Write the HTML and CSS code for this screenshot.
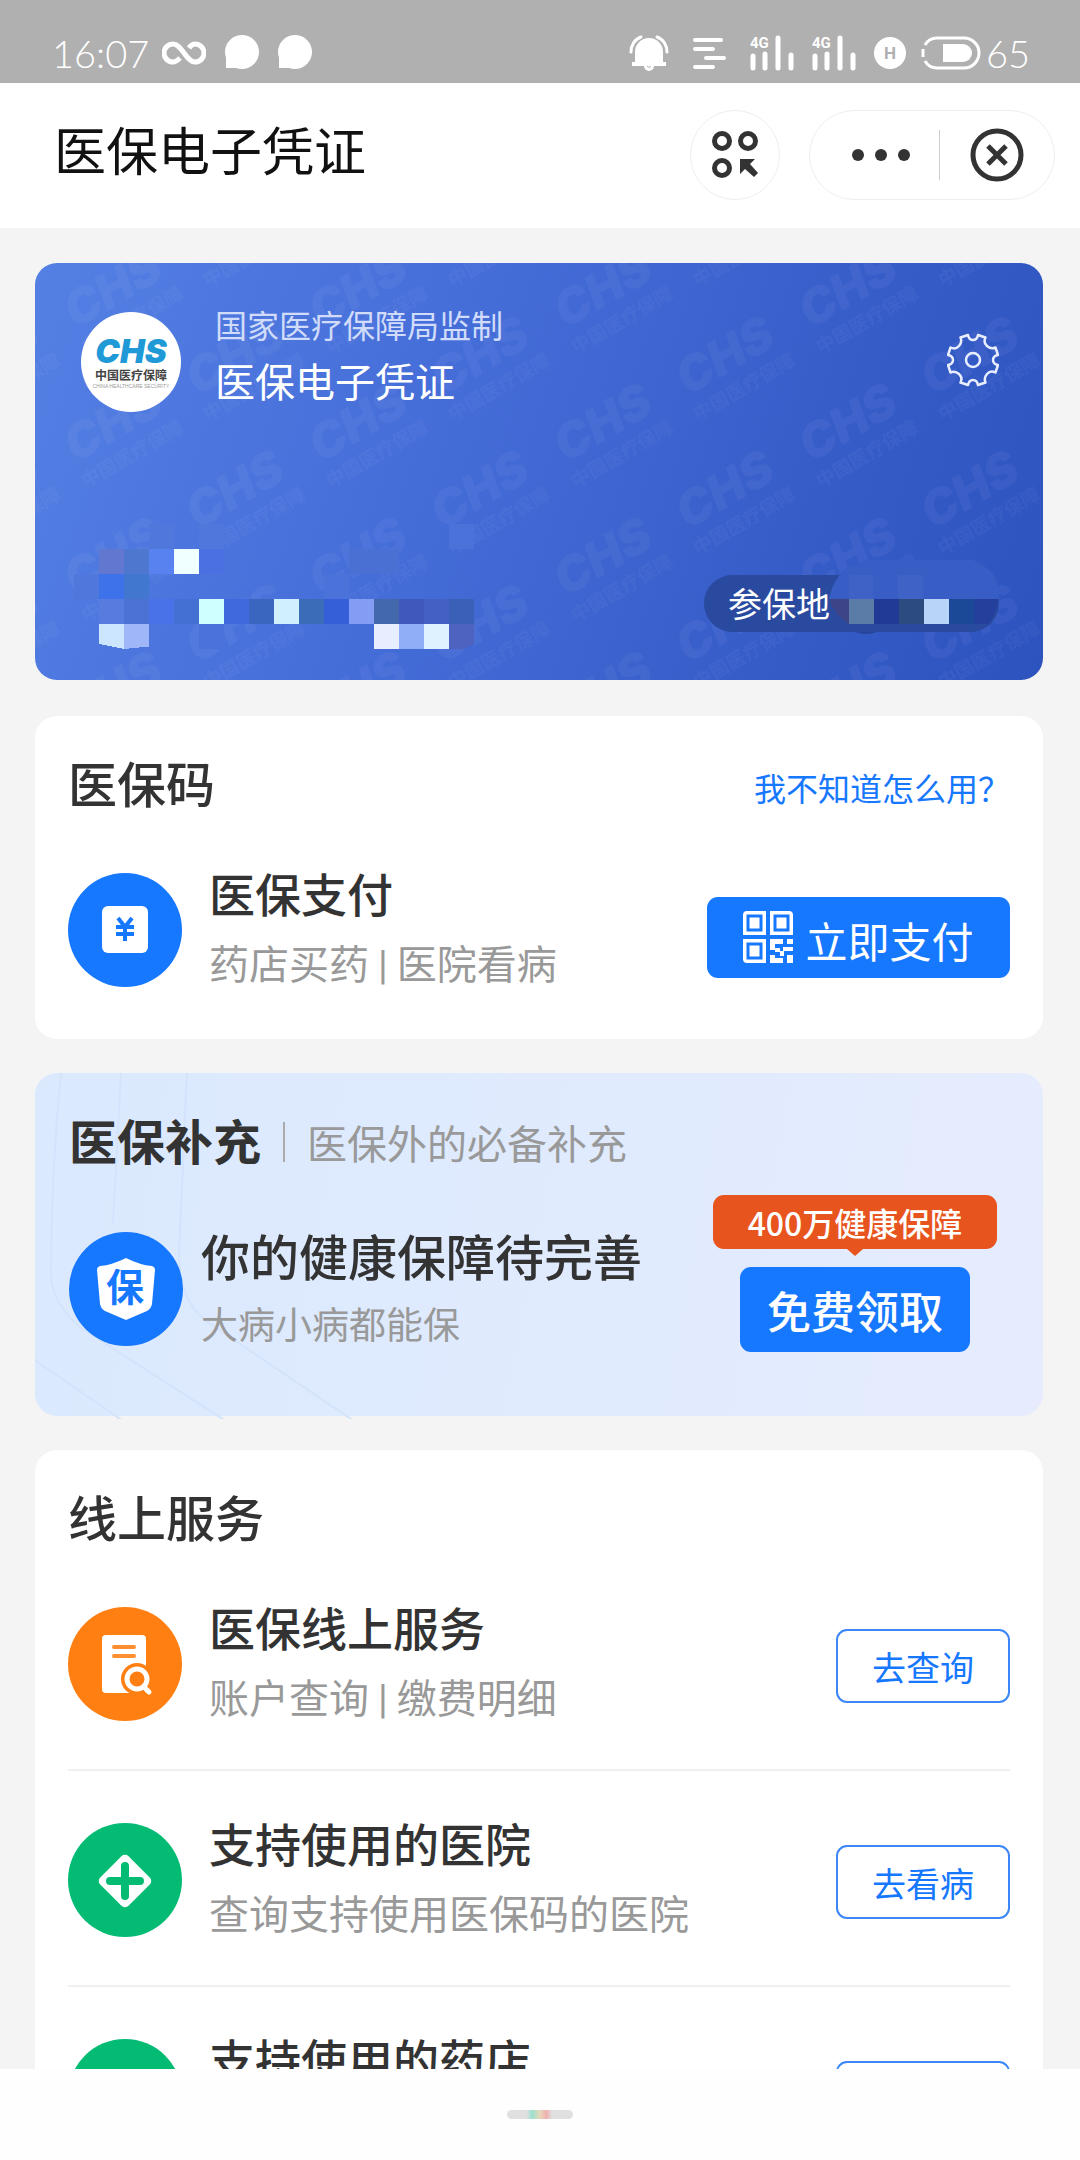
FILE: index.html
```html
<!DOCTYPE html>
<html lang="zh-CN">
<head>
    <meta charset="UTF-8">
    <title>医保电子凭证</title>
    <meta name="viewport" content="width=device-width, initial-scale=1">
    <link rel="stylesheet" href="styles.css">
</head>
<body>
<div class="status-bar">
    <span class="status-text">16:07</span>
    <svg class="icon-infinity" width="44" height="24" viewBox="0 0 44 24"><path d="M18 17C15 20 13 21 11 21a9 9 0 0 1 0-18c9 0 13 18 22 18a9 9 0 0 0 0-18c-2 0-4 1-6 4" fill="none" stroke="#fff" stroke-width="5"/></svg>
    <svg class="icon-bubble" width="35" height="35" viewBox="0 0 35 35"><circle cx="18" cy="17" r="17" fill="#fff"/><path d="M2 20v13h14z" fill="#fff"/></svg>
    <svg class="icon-bubble" width="35" height="35" viewBox="0 0 35 35"><circle cx="18" cy="17" r="17" fill="#fff"/><path d="M2 20v13h14z" fill="#fff"/></svg>
    <div class="status-right">
        <svg width="40" height="36" viewBox="0 0 40 36"><path d="M6 27V17a14 14 0 0 1 28 0v10h3v4H25a5 5 0 0 1-10 0H3v-4z" fill="#fff"/><path d="M2 17C2 10 6 4 12 2M38 17C38 10 34 4 28 2" fill="none" stroke="#fff" stroke-width="3" stroke-linecap="round"/><path d="M18 31q2 3 4 0" fill="none" stroke="#b0b0b0"/></svg>
        <svg class="icon-lines" width="36" height="34" viewBox="0 0 36 34"><path d="M4 4h26M4 13h18M15 22h18M4 31h18" stroke="#fff" stroke-width="4" stroke-linecap="round"/></svg>
        <svg class="icon-signal" width="44" height="36" viewBox="0 0 44 36"><text x="0" y="13" class="net-text">4G</text><path d="M3 21v12M15 19v14M28 3v30M41 20v13" stroke="#fff" stroke-width="5" stroke-linecap="round"/></svg>
        <svg class="icon-signal" width="44" height="36" viewBox="0 0 44 36"><text x="0" y="13" class="net-text">4G</text><path d="M3 21v12M15 19v14M28 3v30M41 20v13" stroke="#fff" stroke-width="5" stroke-linecap="round"/></svg>
        <svg class="icon-h" width="32" height="32" viewBox="0 0 32 32"><circle cx="16" cy="16" r="16" fill="#fff"/><text x="16" y="22" text-anchor="middle" class="h-text">H</text></svg>
        <svg width="60" height="34" viewBox="0 0 60 34"><path d="M16 2h27a15 15 0 0 1 0 30H16" fill="none" stroke="#fff" stroke-width="3"/><path d="M16 2Q8 2 4 9M16 32Q8 32 4 25M2 13v8" fill="none" stroke="#fff" stroke-width="3"/><path d="M22 8h20a9 9 0 0 1 0 18H22z" fill="#fff"/></svg>
        <span class="status-text">65</span>
    </div>
</div>
<header class="header">
    <h1 class="header-title">医保电子凭证</h1>
    <button class="round-btn" type="button" aria-label="更多服务">
        <svg width="48" height="50" viewBox="0 0 48 50"><g fill="none" stroke="#333" stroke-width="5"><circle cx="11" cy="11" r="7.500"/><circle cx="37" cy="11" r="7.500"/><circle cx="11" cy="38" r="7.500"/></g><path d="M29 29h15l-5 5 8 9-4 4-9-8-5 5z" fill="#333"/></svg>
    </button>
    <div class="capsule">
        <button class="capsule-menu" type="button" aria-label="菜单">
            <svg width="60" height="14" viewBox="0 0 60 14"><circle cx="7" cy="7" r="6" fill="#333"/><circle cx="30" cy="7" r="6" fill="#333"/><circle cx="53" cy="7" r="6" fill="#333"/></svg>
        </button>
        <button class="capsule-close" type="button" aria-label="关闭">
            <svg width="54" height="54" viewBox="0 0 54 54"><circle cx="27" cy="27" r="24" fill="none" stroke="#333" stroke-width="5"/><path d="M18 18l18 18M36 18L18 36" stroke="#333" stroke-width="5"/></svg>
        </button>
    </div>
</header>
<main class="main">
    <section class="card id-card">
        <svg class="watermark" width="100%" height="100%">
            <defs>
                <g id="mark"><g transform="rotate(-30)"><text class="mark-en">CHS</text><text x="-4" y="27" class="mark-cn">中国医疗保障</text></g></g>
                <pattern id="marks" width="245" height="134" patternUnits="userSpaceOnUse">
                    <use href="#mark" x="41" y="66"/><use href="#mark" x="41" y="200"/>
                    <use href="#mark" x="163" y="-1"/><use href="#mark" x="163" y="133"/><use href="#mark" x="163" y="267"/>
                    <use href="#mark" x="-82" y="-1"/><use href="#mark" x="-82" y="133"/><use href="#mark" x="-82" y="267"/>
                </pattern>
            </defs>
            <rect width="100%" height="100%" fill="url(#marks)"/>
        </svg>
        <div class="id-top">
            <svg width="100" height="100" viewBox="0 0 100 100"><circle cx="50" cy="50" r="50" fill="#fff"/><text x="50" y="51" text-anchor="middle" class="logo-en">CHS</text><text x="50" y="68" text-anchor="middle" class="logo-cn">中国医疗保障</text><text x="50" y="76" text-anchor="middle" class="logo-sub">CHINA HEALTHCARE SECURITY</text></svg>
            <div class="id-name">
                <p class="id-org">国家医疗保障局监制</p>
                <h2 class="id-title">医保电子凭证</h2>
            </div>
            <button class="gear-btn" type="button" aria-label="设置">
                <svg width="52" height="54" viewBox="-26 -27 52 54"><g fill="none" stroke="#e8eeff" stroke-width="2.500" stroke-linejoin="round"><path d="M-12.500-22.500L-5-25Q-4-20 0-20T5-25L12.500-22.500Q10-17.500 14-14T22.500-12.500L25-5Q20-4 20 0T25 5L22.500 12.500Q17.500 10 14 14T12.500 22.500L5 25Q4 20 0 20T-5 25L-12.500 22.500Q-10 17.500-14 14T-22.500 12.500L-25 5Q-20 4-20 0T-25-5L-22.500-12.500Q-17.500-10-14-14T-12.500-22.500Z"/><circle r="7"/></g></svg>
            </button>
        </div>
        <div class="id-bottom">
            <svg width="400" height="125" viewBox="0 0 16 5" shape-rendering="crispEdges">
                <path fill="#4f77dc" d="M3 0h1v1H3zM5 0h1v1H5zM0 2h1v1H0z"/><path fill="#4a72d8" d="M15 0h1v1h-1zM10 2h1v1h-1zM5 4h1v1H5z"/>
                <path fill="#6277cf" d="M1 1h1v1H1z"/><path fill="#4e77cf" d="M2 1h1v1H2z"/><path fill="#5882f0" d="M3 1h1v1H3z"/><path fill="#f0ffff" d="M4 1h1v1H4z"/><path fill="#4a70e2" d="M5 1h1v1H5z"/><path fill="#4a70d4" d="M11 1h2v1h-2z"/>
                <path fill="#3e72ea" d="M1 2h1v1H1z"/><path fill="#4277cf" d="M2 2h1v1H2z"/>
                <path fill="#577bdf" d="M1 3h1v1H1z"/><path fill="#4b72d4" d="M2 3h1v1H2z"/><path fill="#4a72e8" d="M3 3h1v1H3z"/><path fill="#4470d4" d="M4 3h1v1H4z"/><path fill="#d0ffff" d="M5 3h1v1H5z"/><path fill="#3f69dc" d="M6 3h1v1H6z"/><path fill="#3b66c0" d="M7 3h1v1H7z"/><path fill="#d0f0ff" d="M8 3h1v1H8z"/><path fill="#3b6cb8" d="M9 3h1v1H9z"/><path fill="#355fd8" d="M10 3h1v1h-1z"/><path fill="#849cf4" d="M11 3h1v1h-1z"/><path fill="#4468ac" d="M12 3h1v1h-1z"/><path fill="#4058bc" d="M13 3h1v1h-1z"/><path fill="#4560c4" d="M14 3h1v1h-1z"/><path fill="#3a60b8" d="M15 3h1v1h-1z"/>
                <path fill="#cce6ff" d="M1 4h1v1L1 4.800z"/><path fill="#9fb6f8" d="M2 4h1v.900L2 5z"/><path fill="#e6eeff" d="M12 4h1v1h-1z"/><path fill="#90aef8" d="M13 4h1v1h-1z"/><path fill="#dff2ff" d="M14 4h1v1h-1z"/><path fill="#4e62c0" d="M15 4h1v.800L15.600 5H15z"/>
            </svg>
            <div class="place">参保地
                <svg class="place-mask" width="176" height="75" viewBox="0 0 176 75">
                    <path d="M4 39Q8 18 24 6L44 0h104q24 10 26 30v9z" fill="#385dc5"/>
                    <path d="M24 15h24v24H24zM73 15h25v24H73z" fill="#3e62c6"/>
                    <path d="M4 39h20v25Q10 56 4 39z" fill="#3d4488"/>
                    <path d="M24 39h25v25H24z" fill="#5c7ca8"/><path d="M49 39h25v25H49z" fill="#203a96"/><path d="M74 39h25v25H74z" fill="#2c4c80"/><path d="M99 39h25v25H99z" fill="#b8d4f8"/><path d="M124 39h25v25h-25z" fill="#1c4898"/><path d="M149 39h24q-1 15-10 25h-14z" fill="#24409c"/>
                    <path d="M30 72h22q-11 4-22 0z" fill="#26459a"/>
                </svg>
            </div>
        </div>
    </section>

    <section class="card">
        <div class="card-head">
            <h2 class="card-title">医保码</h2>
            <a class="help" href="#">我不知道怎么用？</a>
        </div>
        <div class="item">
            <svg class="item-icon" viewBox="0 0 114 114"><circle cx="57" cy="57" r="57" fill="#1677ff"/><rect x="34" y="33" width="46" height="47" rx="6" fill="#fff"/><path d="M50 45l7 9 7-9M57 54v14M48 54h18M48 61h18" fill="none" stroke="#1677ff" stroke-width="4"/></svg>
            <div class="item-text">
                <h3>医保支付</h3>
                <p>药店买药 <span class="sep">|</span> 医院看病</p>
            </div>
            <button class="pay-btn" type="button">
                <svg width="50" height="52" viewBox="0 0 50 52"><path d="M4 0h19v24H0V4q0-4 4-4zM27 0h19q4 0 4 4v20H27zM0 28h23v24H4q-4 0-4-4z" fill="#fff"/><g fill="#fff" stroke="#1677ff" stroke-width="3"><path d="M5 5h13v14H5zM32 5h13v14H32zM5 33h13v14H5z"/></g><path d="M27 28h13v5h-8v4h5v4h-5v-2h-5zM44 28h6v5h-6zM40 36h10v4H40zM37 40h4v5h-4zM27 44h5v3h8v5H27zM44 44h6v8h-6z" fill="#fff"/></svg>
                <span class="pay-label">立即支付</span>
            </button>
        </div>
    </section>

    <section class="card plus-card">
        <svg class="plus-lines" width="340" height="346" viewBox="0 0 340 346"><path d="M26 0Q16 100 16 200q0 30 30 55l145 93M86 0L78 150M152 0l-8 180q0 50 30 70l145 98M0 287l88 61" fill="none" stroke="#d3e3fb" stroke-width="2"/></svg>
        <div class="plus-head">
            <h2>医保补充</h2>
            <p>医保外的必备补充</p>
        </div>
        <div class="plus-body">
            <div class="plus-item">
                <svg class="item-icon" viewBox="0 0 114 114"><circle cx="57" cy="57" r="57" fill="#1677ff"/><path d="M57 26q14 7 26 8 3 1 3 4l-3 34q-1 5-5 7L57 88 36 79q-4-2-5-7l-3-34q0-3 3-4 12-1 26-8z" fill="#fff"/><text x="56" y="69" text-anchor="middle" class="shield-text">保</text></svg>
                <div class="plus-text">
                    <h3>你的健康保障待完善</h3>
                    <p>大病小病都能保</p>
                </div>
            </div>
            <div class="plus-action">
                <span class="plus-tip">400万健康保障</span>
                <button class="get-btn" type="button">免费领取</button>
            </div>
        </div>
    </section>

    <section class="card">
        <div class="card-head">
            <h2 class="card-title">线上服务</h2>
        </div>
        <div class="item">
            <svg class="item-icon" viewBox="0 0 114 114"><circle cx="57" cy="57" r="57" fill="#ff7f12"/><path d="M38 28h36q4 0 4 4v52q0 2-3 2H38q-4 0-4-4V32q0-4 4-4z" fill="#fff"/><path d="M46 40h20M46 49h20" stroke="#ff8f30" stroke-width="4" stroke-linecap="round"/><circle cx="69" cy="72" r="16" fill="#ff7f12"/><circle cx="69" cy="72" r="10" fill="none" stroke="#fff" stroke-width="5"/><path d="M76 80l5 5" stroke="#fff" stroke-width="5" stroke-linecap="round"/></svg>
            <div class="item-text">
                <h3>医保线上服务</h3>
                <p>账户查询 <span class="sep">|</span> 缴费明细</p>
            </div>
            <button class="line-btn" type="button">去查询</button>
        </div>
        <div class="item">
            <svg class="item-icon" viewBox="0 0 114 114"><circle cx="57" cy="57" r="57" fill="#04bb74"/><rect x="37" y="38" width="40" height="40" rx="5" transform="rotate(45 57 58)" fill="#fff"/><path d="M57 43v30M42 58h30" stroke="#04bb74" stroke-width="8" stroke-linecap="round"/></svg>
            <div class="item-text">
                <h3>支持使用的医院</h3>
                <p>查询支持使用医保码的医院</p>
            </div>
            <button class="line-btn" type="button">去看病</button>
        </div>
        <div class="item">
            <svg class="item-icon" viewBox="0 0 114 114"><circle cx="57" cy="57" r="57" fill="#04bb74"/></svg>
            <div class="item-text">
                <h3>支持使用的药店</h3>
            </div>
            <button class="line-btn" type="button" aria-label="支持使用的药店"></button>
        </div>
    </section>
</main>
<footer class="nav-bar"><span class="nav-handle"></span></footer>
</body>
</html>
```
FILE: styles.css
```css
/*reset*/
body,h1,h2,h3,p,button{
    padding: 0;
    margin: 0;
}
h1,h2,h3{
    font-weight: 500;
}
button{
    border: 0;
    background: none;
    font-family: inherit;
    cursor: pointer;
}
svg{
    display: block;
    flex-shrink: 0;
}
a{
    text-decoration: none;
}
*{
    box-sizing: border-box;
}
/*public*/
body{
    display: flex;
    flex-direction: column;
    height: 100vh;
    overflow: hidden;
    background: #f4f4f4;
    color: #333;
    font-family: "Noto Sans CJK SC","Microsoft YaHei",sans-serif;
}

/*status bar*/
.status-bar{
    display: flex;
    align-items: center;
    flex-shrink: 0;
    height: 83px;
    padding: 22px 50px 0 52px;
    background: #b0b0b0;
}
.status-text{
    color: #fff;
    font: 300 38px/44px Lato,sans-serif;
}
.icon-infinity{
    margin-left: 13px;
}
.icon-bubble{
    margin-left: 18px;
}
.status-right{
    display: flex;
    align-items: center;
    margin-left: auto;
}
.icon-lines{
    margin-left: 22px;
    margin-right: 5px;
}
.icon-signal{
    margin-left: 18px;
}
.icon-h{
    margin: 0 15px 0 18px;
}
.status-right .status-text{
    margin-left: 5px;
}
.net-text{
    fill: #fff;
    font: 700 15px "Roboto",sans-serif;
}
.h-text{
    fill: #b0b0b0;
    font: 700 17px "Roboto",sans-serif;
}

/*header*/
.header{
    display: flex;
    align-items: center;
    flex-shrink: 0;
    height: 145px;
    padding: 0 25px 2px 54px;
    background: #fff;
}
.header-title{
    margin-right: auto;
    padding-bottom: 12px;
    color: #111;
    font-size: 52px;
    font-weight: 400;
    line-height: 76px;
    font-family: KaiTi,STKaiti,"Noto Sans CJK SC",sans-serif;
}
.round-btn,.capsule{
    display: flex;
    align-items: center;
    justify-content: center;
    height: 90px;
    border: 1px solid #eee;
    border-radius: 45px;
}
.round-btn{
    width: 90px;
    margin-right: 29px;
}
.capsule{
    width: 246px;
}
.capsule button{
    display: flex;
    align-items: center;
    justify-content: center;
    flex: 1;
    height: 50px;
}
.capsule .capsule-menu{
    padding-left: 14px;
}
.capsule .capsule-close{
    border-left: 1px solid #ccc;
}

/*cards*/
.main{
    flex: 1;
    min-height: 0;
    overflow: hidden;
    padding: 35px 37px 0 35px;
}
.card{
    position: relative;
    margin-bottom: 34px;
    padding: 34px 33px 4px;
    border-radius: 22px;
    background: #fff;
}
.card-head{
    display: flex;
    justify-content: space-between;
    align-items: center;
    margin-bottom: 7px;
}
.card-title{
    font-size: 49px;
    line-height: 64px;
}
.help{
    color: #1677ff;
    font-size: 32px;
    line-height: 48px;
    padding-top: 10px;
}
.item{
    display: flex;
    align-items: center;
    padding: 37px 0 33px;
}
.item + .item{
    border-top: 2px solid #f0f0f0;
}
.item-icon{
    width: 114px;
    height: 116px;
}
.item-text{
    flex: 1;
    min-height: 144px;
    margin-left: 27px;
}
.item-text h3{
    font-size: 46px;
    line-height: 68px;
}
.item-text p{
    color: #999;
    font-size: 40px;
    line-height: 72px;
}
.sep{
    font-family: Roboto,sans-serif;
    line-height: 1;
}
.pay-btn{
    display: flex;
    align-items: center;
    justify-content: center;
    gap: 12px;
    width: 303px;
    height: 81px;
    margin-top: 14px;
    border-radius: 11px;
    background: #1677ff;
    color: #fff;
    font-size: 42px;
    line-height: 64px;
}
.pay-label{
    padding-top: 6px;
}
.line-btn{
    width: 174px;
    height: 74px;
    margin-top: 4px;
    border: 2px solid #3c86f8;
    border-radius: 11px;
    color: #1677ff;
    font-size: 34px;
}

/*id card*/
.id-card{
    display: flex;
    flex-direction: column;
    justify-content: space-between;
    height: 417px;
    margin-bottom: 36px;
    padding: 45px 44px 31px 39px;
    overflow: hidden;
    background: linear-gradient(110deg,#5480e4 0%,#456dd8 40%,#365cc8 75%,#2d53bf 100%);
    color: #fff;
}
.watermark{
    position: absolute;
    top: 0;
    left: 0;
}
.mark-en{
    fill: #fff;
    fill-opacity: .045;
    font: italic 900 48px Inter,sans-serif;
}
.mark-cn{
    fill: #fff;
    fill-opacity: .035;
    font-size: 19px;
    font-weight: 700;
}
.logo-en{
    fill: #1f9ad6;
    font: italic 900 33px Inter,sans-serif;
}
.logo-cn{
    fill: #444;
    font-size: 12px;
    font-weight: 700;
}
.logo-sub{
    fill: #999;
    font: 5px "Liberation Sans",sans-serif;
}
.id-top,.id-bottom{
    position: relative;
    display: flex;
}
.id-top{
    padding: 4px 0 0 7px;
}
.id-name{
    flex: 1;
    margin: -12px 0 0 34px;
}
.id-org{
    color: #d0dcfa;
    font-size: 32px;
    line-height: 48px;
}
.id-title{
    font-size: 40px;
    font-weight: 400;
    line-height: 64px;
}
.gear-btn{
    align-self: center;
    padding-bottom: 4px;
}
.id-bottom{
    justify-content: space-between;
    align-items: flex-end;
}
.place{
    position: relative;
    width: 295px;
    height: 57px;
    margin-bottom: 17px;
    padding-left: 24px;
    border-radius: 29px;
    background: #294a9f;
    font-size: 34px;
    line-height: 56px;
}
.place-mask{
    position: absolute;
    right: -2px;
    bottom: -3px;
}

/*plus card*/
.plus-card{
    padding: 34px 46px 59px 34px;
    background: linear-gradient(100deg,#dae9fe,#e6ecfe);
}
.plus-lines{
    position: absolute;
    top: 0;
    left: 0;
}
.plus-head,.plus-body,.plus-item{
    position: relative;
    display: flex;
}
.plus-head{
    align-items: center;
    margin-bottom: 24px;
}
.plus-head h2{
    font-size: 48px;
    font-weight: 700;
    line-height: 64px;
}
.plus-head p{
    margin: 6px 0 0 22px;
    padding-left: 22px;
    border-left: 2px solid #aaa;
    color: #999;
    font-size: 40px;
    line-height: 40px;
}
.plus-body{
    justify-content: space-between;
    align-items: flex-start;
}
.plus-item{
    align-items: center;
    padding-top: 26px;
}
.plus-text{
    margin-left: 18px;
}
.plus-text h3{
    font-size: 49px;
    line-height: 68px;
}
.plus-text p{
    color: #999;
    font-size: 37px;
    line-height: 68px;
}
.shield-text{
    fill: #1677ff;
    font-size: 38px;
    font-weight: 700;
}
.plus-action{
    display: flex;
    flex-direction: column;
    align-items: center;
    gap: 18px;
}
.plus-tip{
    position: relative;
    width: 284px;
    border-radius: 11px;
    background: #e8541e;
    color: #fff;
    font-size: 32px;
    font-weight: 500;
    line-height: 54px;
    text-align: center;
}
.plus-tip:after{
    content: "";
    position: absolute;
    top: 100%;
    left: 50%;
    margin-left: -8px;
    border: 8px solid transparent;
    border-top: 7px solid #e8541e;
    border-bottom: 0;
}
.get-btn{
    width: 230px;
    height: 85px;
    border-radius: 11px;
    background: #1677ff;
    color: #fff;
    font-size: 44px;
    font-weight: 500;
}

/*bottom bar*/
.nav-bar{
    display: flex;
    align-items: center;
    justify-content: center;
    flex-shrink: 0;
    height: 91px;
    background: #fefefe;
}
.nav-handle{
    width: 66px;
    height: 9px;
    border-radius: 5px;
    background: linear-gradient(90deg,#e0e0e0 30%,#9be0d0 38%,#e8d8b8 50%,#f0b0b0 60%,#e0e0e0 68%);
}
```
